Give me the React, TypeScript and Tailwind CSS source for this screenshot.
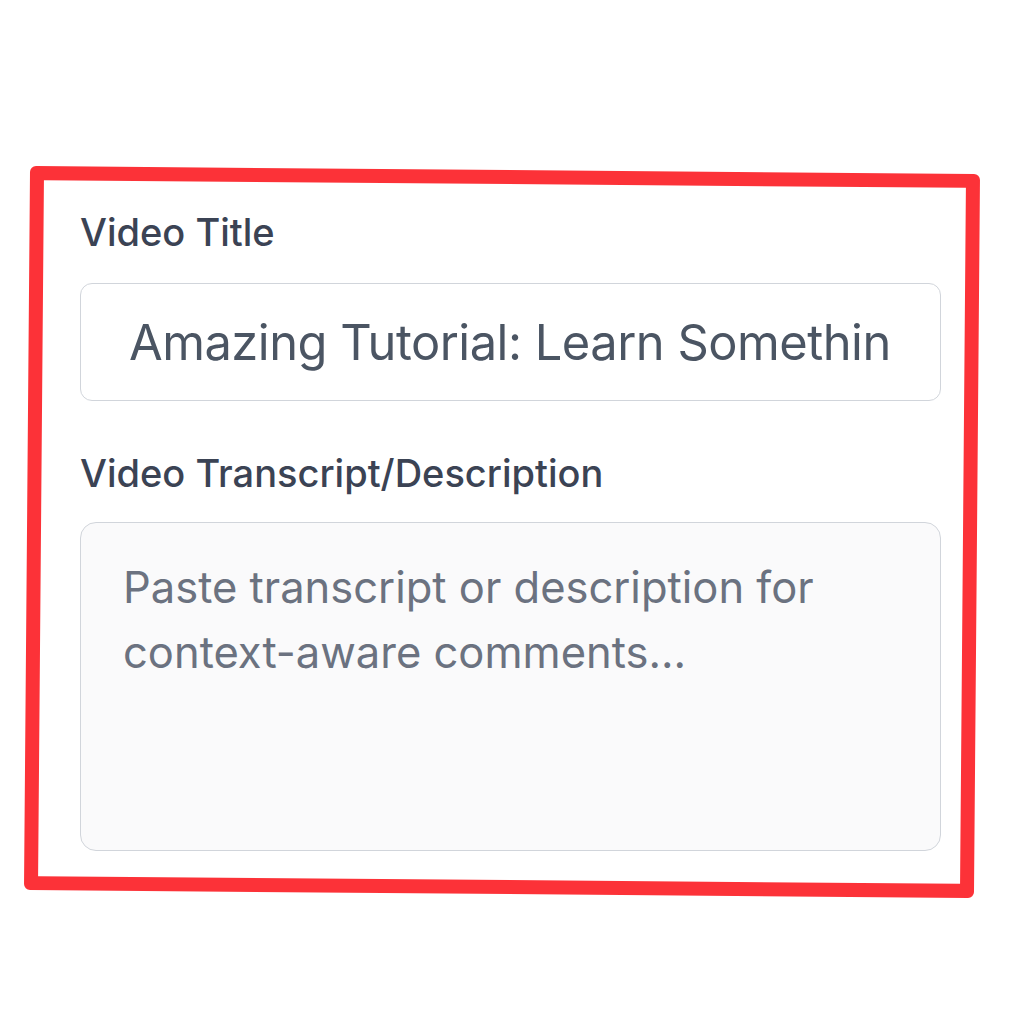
import React from 'react';

const font = { fontFamily: 'Inter, "Noto Sans", sans-serif' };

export default function App() {
    return (
        <div className="relative w-full h-[1024px] bg-white overflow-hidden" style={font}>
            <div className="flex flex-col pl-[80px] pt-[209px] w-[941px]">
                <label className="text-[38px] leading-[46px] font-medium text-[#3b4354]">Video Title</label>
                <input
                    readOnly
                    value="Amazing Tutorial: Learn Something New Today"
                    className="mt-[28px] h-[118px] w-full rounded-[12px] border border-[#d1d5db] bg-white px-[48px] text-[48.8px] tracking-[-0.01em] text-[#4b5563] outline-none"
                    style={font}
                />
                <label className="mt-[49px] text-[38px] leading-[46px] font-medium text-[#3b4354]">Video Transcript/Description</label>
                <textarea
                    placeholder="Paste transcript or description for context-aware comments..."
                    className="mt-[26px] h-[329px] w-full resize-none rounded-[16px] border border-[#d1d5db] bg-[#fafafb] pl-[42px] pr-[40px] pt-[32px] text-[43.5px] leading-[65px] placeholder:text-[#6b7280] outline-none"
                    style={font}
                />
            </div>
            {/* red annotation frame drawn over the form */}
            <div className="pointer-events-none absolute left-[27px] top-[170px] w-[950px] h-[724px] rotate-[0.48deg] rounded-[6px] border-[14px] border-[#fc3238]" />
        </div>
    );
}
